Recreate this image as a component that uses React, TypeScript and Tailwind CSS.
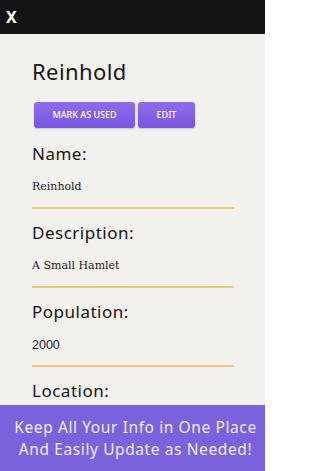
import React from 'react';

interface Field {
    label: string;
    value?: string;
    serif?: boolean;
}

const fields: Field[] = [
    { label: 'Name:', value: 'Reinhold', serif: true },
    { label: 'Description:', value: 'A Small Hamlet', serif: true },
    { label: 'Population:', value: '2000' },
    { label: 'Location:' },
];

const heading = { fontFamily: '"Noto Sans", "Open Sans", sans-serif' };

export default function App() {
    return (
        <div className="w-[265px] h-[471px] overflow-hidden bg-[#f3f1ed] relative" style={heading}>
            {/* Top bar */}
            <div className="h-[34px] bg-[#131416] flex items-center pl-[6px]">
                <span className="text-white font-bold text-[16px] leading-none">X</span>
            </div>

            <div className="px-[32px]">
                <h1 className="mt-[23px] text-[22px] leading-[28px] text-[#151515] tracking-[0.4px]">Reinhold</h1>

                {/* Actions */}
                <div className="mt-[17px] flex gap-[3px] pl-[2px]">
                    <button className="w-[101px] h-[26px] rounded-[3px] bg-gradient-to-b from-[#8d6deb] to-[#7856e0] text-white text-[9px] font-medium shadow-[0_1px_2px_rgba(0,0,0,0.2)]">
                        MARK AS USED
                    </button>
                    <button className="w-[57px] h-[26px] rounded-[3px] bg-gradient-to-b from-[#8d6deb] to-[#7856e0] text-white text-[9px] font-medium shadow-[0_1px_2px_rgba(0,0,0,0.2)]">
                        EDIT
                    </button>
                </div>

                {/* Fields */}
                <div className="mt-[16px] w-[202px]">
                    {fields.map((f, i) => (
                        <div key={i} className={i > 0 ? 'mt-[14px]' : ''}>
                            <div className="text-[17px] leading-[20px] text-[#151515] tracking-[0.5px]">{f.label}</div>
                            {f.value && (
                                <div className="mt-[15px] pb-[12px] border-b-2 border-[#efc47c]">
                                    <div
                                        className={f.serif ? 'text-[11px] leading-[16px] text-[#1a1a1a]' : 'text-[12.5px] leading-[16px] text-[#1a1a1a]'}
                                        style={{ fontFamily: f.serif ? '"DejaVu Serif", serif' : '"Liberation Sans", sans-serif' }}
                                    >
                                        {f.value}
                                    </div>
                                </div>
                            )}
                        </div>
                    ))}
                </div>
            </div>

            {/* Promo banner */}
            <div className="absolute bottom-0 left-0 right-0 h-[66px] bg-[#7b61dc] flex flex-col items-center justify-center text-[#f1ecff] text-[15.5px] leading-[22px] tracking-[0.6px] pl-[6px]">
                <div>Keep All Your Info in One Place</div>
                <div>And Easily Update as Needed!</div>
            </div>
        </div>
    );
}
